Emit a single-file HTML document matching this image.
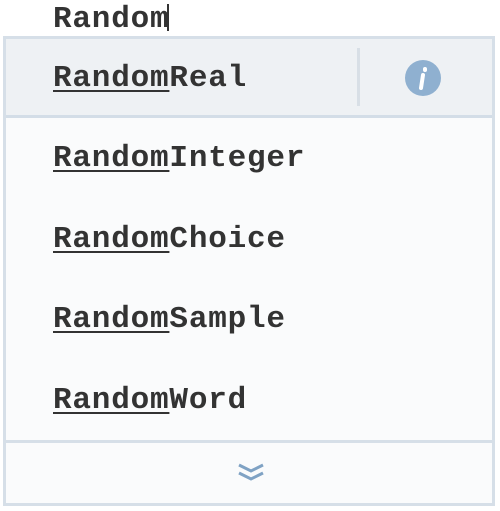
<!DOCTYPE html>
<html><head><style>
body{margin:0;width:500px;height:511px;background:#fff;position:relative;overflow:hidden;font-family:"Liberation Mono",monospace;color:#333;}
.t{position:absolute;left:53px;font-size:31px;line-height:40px;font-weight:bold;letter-spacing:0.8px;}
u{text-decoration:underline;text-decoration-thickness:2px;text-underline-offset:4px}
</style></head><body>
<div class="t" style="top:0px">Random<span style="display:inline-block;width:2px;height:27px;background:#333;vertical-align:-4px;margin-left:-2px"></span></div>
<div style="position:absolute;left:3px;top:36px;width:486px;height:464px;border:3px solid #d6dfe8;background:#fafbfc"></div>
<div style="position:absolute;left:6px;top:39px;width:486px;height:76px;background:#eef1f4;border-bottom:3px solid #d3dde7"></div>
<div style="position:absolute;left:357px;top:48px;width:3px;height:58px;background:#d8dfe6"></div>
<svg style="position:absolute;left:404px;top:59px" width="38" height="38"><circle cx="19" cy="19" r="18" fill="#8fb0d0"/><path d="M21 10v1M19 16l-2 13" stroke="#fff" stroke-width="4" stroke-linecap="round"/></svg>
<div class="t" style="top:59px"><u>Random</u>Real</div>
<div class="t" style="top:139px"><u>Random</u>Integer</div>
<div class="t" style="top:220px"><u>Random</u>Choice</div>
<div class="t" style="top:300px"><u>Random</u>Sample</div>
<div class="t" style="top:381px"><u>Random</u>Word</div>
<div style="position:absolute;left:6px;top:440px;width:486px;height:3px;background:#d6dfe8"></div>
<svg style="position:absolute;left:236px;top:462px" width="30" height="22"><path d="M3 3l12 6 12-6M3 11l12 6 12-6" stroke="#7fa2c4" stroke-width="3" fill="none"/></svg>
</body></html>
